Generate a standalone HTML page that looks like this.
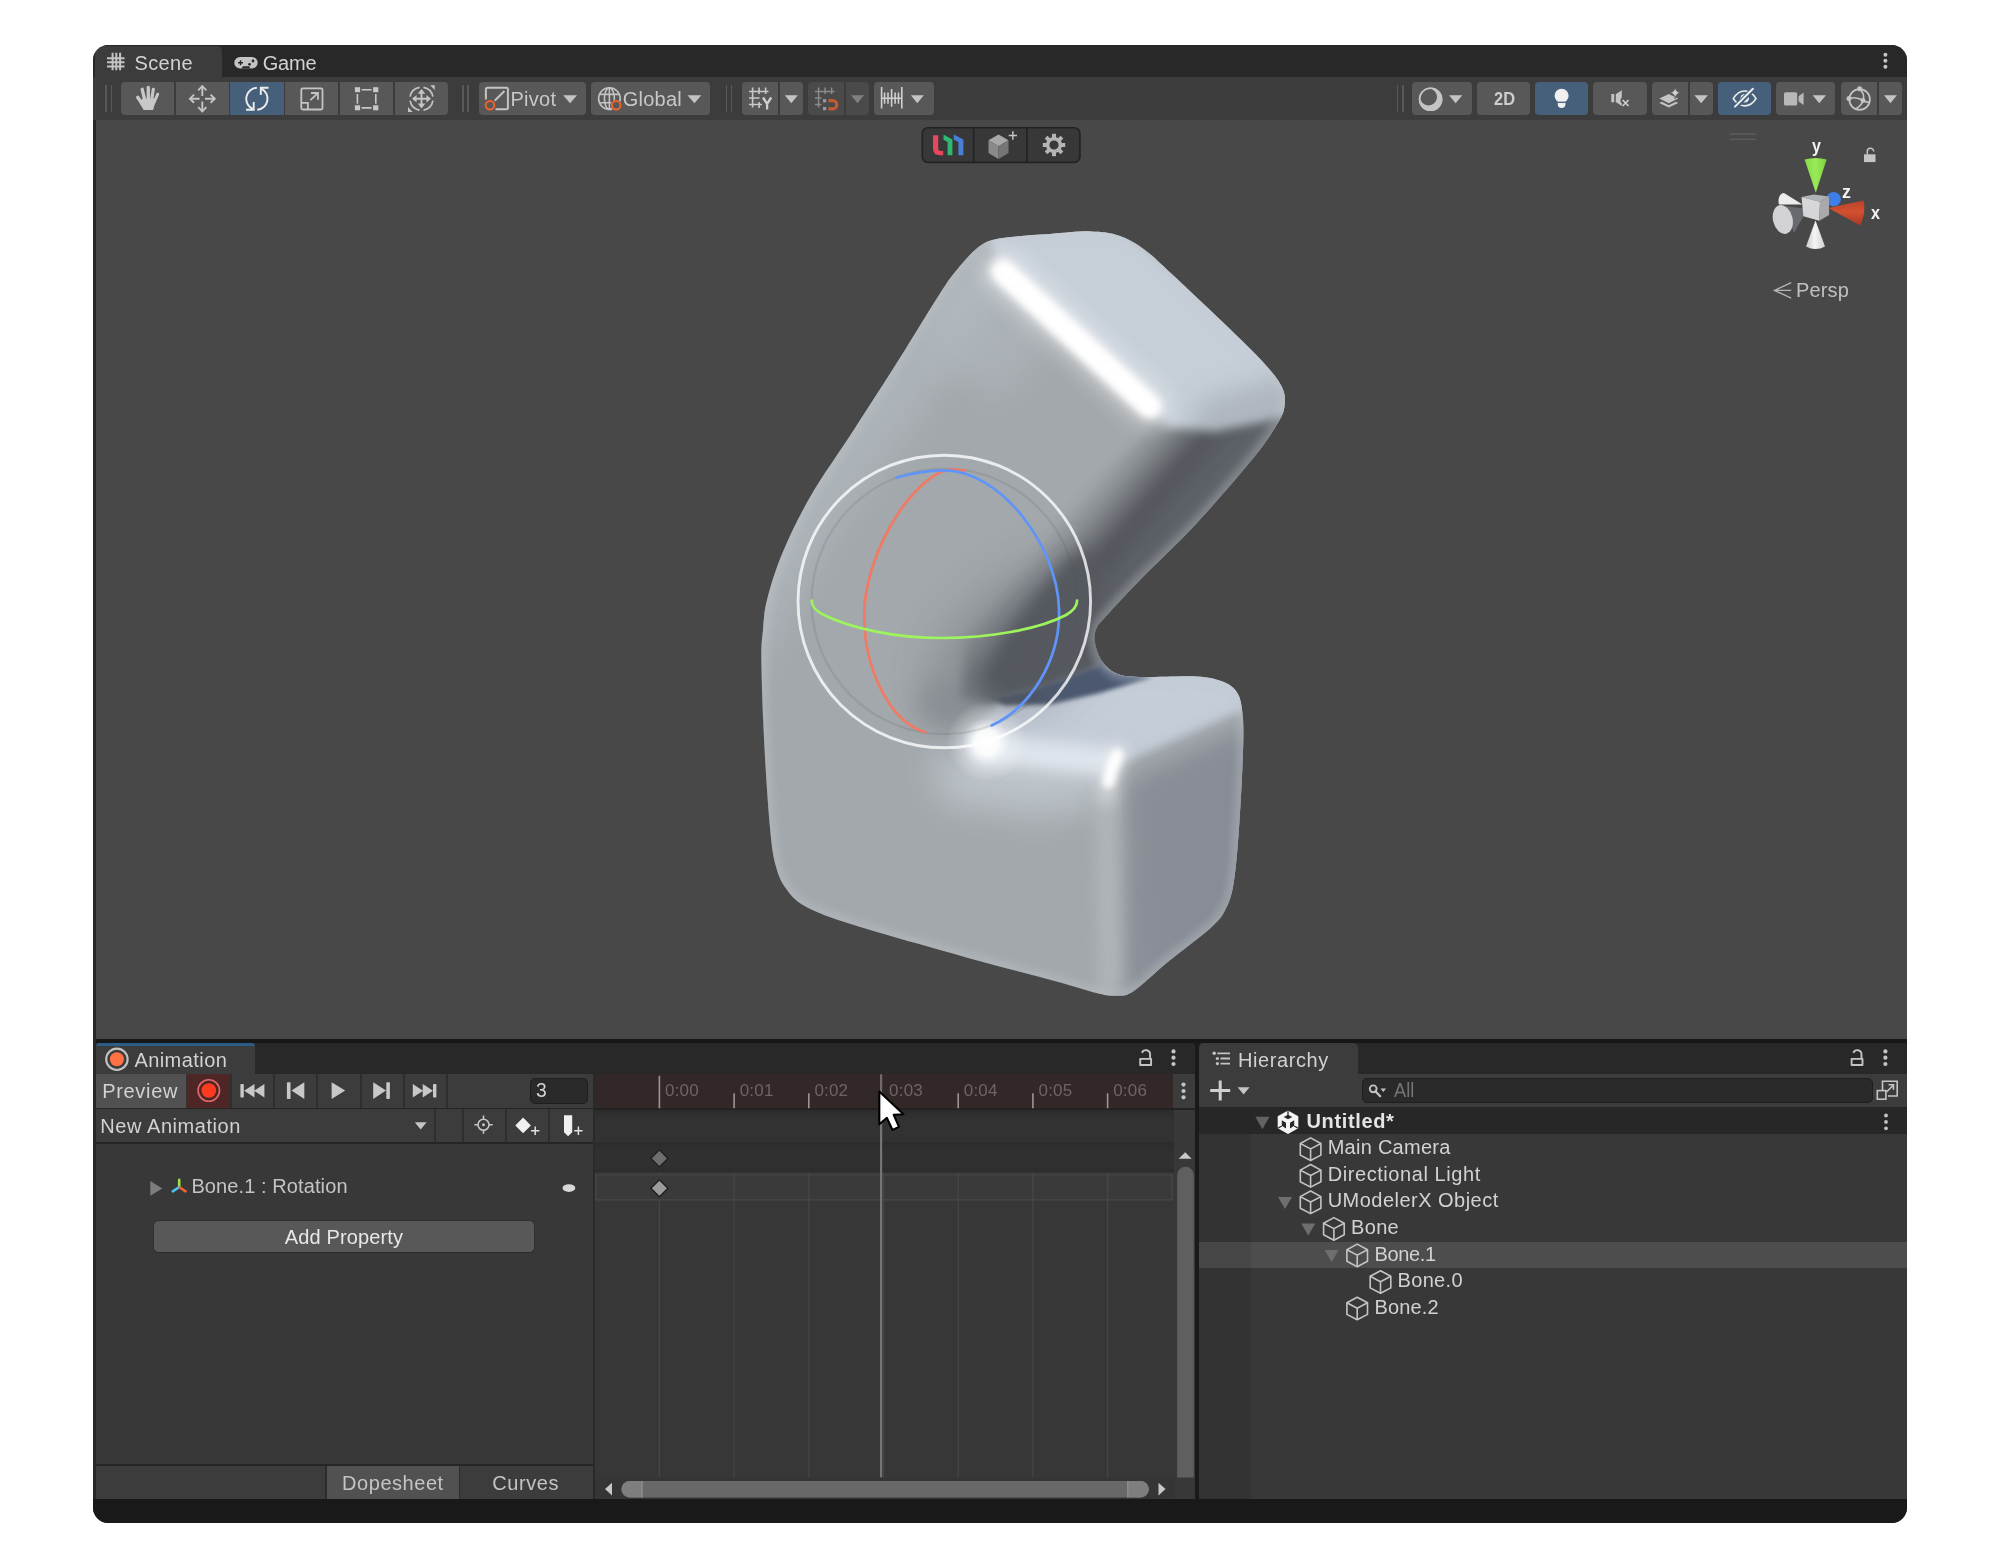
<!DOCTYPE html>
<html>
<head>
<meta charset="utf-8">
<title>Unity Editor</title>
<style>
html,body{margin:0;padding:0;background:#fff;}
body{width:1999px;height:1567px;position:relative;overflow:hidden;font-family:"Liberation Sans",sans-serif;font-size:20px;color:#d2d2d2;}
#win{position:absolute;left:93px;top:45px;width:1814px;height:1477.5px;border-radius:15.5px;background:#282828;overflow:hidden;}
#pg{position:absolute;left:-93px;top:-45px;width:1999px;height:1567px;will-change:transform;}
#pg div,#pg svg,#pg span{position:absolute;}
#pg svg{overflow:visible;}
.t{white-space:nowrap;line-height:24px;height:24px;color:#d2d2d2;transform-origin:0 50%;}
.btn{background:#585858;top:82px;height:33px;}
.btn.on{background:#46607c;}
.btn.dis{background:#4a4a4a;}
.grip{top:85px;width:1.5px;height:27px;background:#595959;}
.sep{top:1074px;width:2px;height:34px;background:#2e2e2e;}
.sep2{top:1109px;width:2px;height:33px;background:#2e2e2e;}
.tl{top:1078.6px;font-size:17px;color:#6f6464;letter-spacing:0.2px;}
.gl{font-weight:bold;font-size:18px;color:#f4f4f4;}
.row{left:1199px;width:708px;height:26.6px;}
</style>
<style id="fit">
#tScene{left:134.60px !important;top:50.60px !important;letter-spacing:0.304px;}
#tGame{left:262.70px !important;top:50.60px !important;letter-spacing:-0.180px;}
#tPivot{left:510.50px !important;top:87.20px !important;letter-spacing:0.273px;}
#tGlobal{left:622.80px !important;top:87.20px !important;letter-spacing:0.226px;}
#t2D{left:1493.60px !important;top:87.20px !important;letter-spacing:0.000px;transform:scaleX(0.8656);transform-origin:0 50%;}
#tPersp{left:1796.00px !important;top:277.70px !important;letter-spacing:0.144px;}
#tAnimation{left:134.40px !important;top:1048.00px !important;letter-spacing:0.436px;}
#tPreview{left:102.20px !important;top:1078.60px !important;letter-spacing:0.685px;}
#tFrame{left:536.40px !important;top:1078.00px !important;letter-spacing:0.000px;transform:scaleX(0.9636);transform-origin:0 50%;}
#tNewAnim{left:100.30px !important;top:1113.80px !important;letter-spacing:0.560px;}
#tBoneRot{left:191.40px !important;top:1173.80px !important;letter-spacing:0.098px;}
#tAddProp{left:284.80px !important;top:1225.00px !important;letter-spacing:0.125px;}
#tDope{left:342.10px !important;top:1470.50px !important;letter-spacing:0.540px;}
#tCurves{left:492.20px !important;top:1470.50px !important;letter-spacing:0.610px;}
#tHier{left:1238.00px !important;top:1048.00px !important;letter-spacing:0.578px;}
#tAll{left:1393.50px !important;top:1078.10px !important;letter-spacing:0.000px;transform:scaleX(0.9090);transform-origin:0 50%;}
#tUntitled{left:1306.50px !important;top:1108.60px !important;letter-spacing:0.633px;}
#tMainCam{left:1327.70px !important;top:1135.40px !important;letter-spacing:0.258px;}
#tDirLight{left:1327.70px !important;top:1161.93px !important;letter-spacing:0.572px;}
#tUMod{left:1327.70px !important;top:1188.46px !important;letter-spacing:0.477px;}
#tBone{left:1351.10px !important;top:1214.99px !important;letter-spacing:0.305px;}
#tBone1{left:1374.40px !important;top:1241.52px !important;letter-spacing:-0.313px;}
#tBone0{left:1397.60px !important;top:1268.05px !important;letter-spacing:0.307px;}
#tBone2{left:1374.40px !important;top:1294.58px !important;letter-spacing:0.147px;}
#tY{left:1811.70px !important;top:133.60px !important;letter-spacing:0.000px;transform:scaleX(0.8900);transform-origin:0 50%;}
#tZ{left:1841.70px !important;top:179.80px !important;letter-spacing:0.000px;transform:scaleX(0.9889);transform-origin:0 50%;}
#tX{left:1871.00px !important;top:200.90px !important;letter-spacing:0.000px;transform:scaleX(0.9000);transform-origin:0 50%;}
</style>
</head>
<body>
<div id="win"><div id="pg">
<!-- all coordinates below are page pixel coordinates -->

<!-- ================= SCENE PANEL ================= -->
<div id="scenepanel" style="left:93px;top:45px;width:1814px;height:996px;background:#282828;"></div>
<div style="left:95.600px;top:1039px;width:1812px;height:9px;background:#171717;"></div>
<div style="left:1195.200px;top:1042.400px;width:3.700px;height:457px;background:#1a1a1a;"></div>
<div style="left:93px;top:1499px;width:1814px;height:24px;background:#191919;"></div>
<div id="scenetab" style="left:95px;top:46px;width:126.5px;height:31px;background:#3c3c3c;border-radius:5px 5px 0 0;"></div>
<div id="toolbar" style="left:93px;top:76.5px;width:1814px;height:43px;background:#3c3c3c;"></div>
<div id="sceneview" style="left:95.6px;top:119.6px;width:1812px;height:919.5px;background:#484848;"></div>
<span class="t" id="tScene" style="left:134.5px;top:50px;">Scene</span>
<span class="t" id="tGame" style="left:262.5px;top:50px;">Game</span>
<div class="btn " style="left:121px;width:53.2px;border-radius:4px 0px 0px 4px;"></div><div class="btn " style="left:175.8px;width:53.2px;border-radius:0px 0px 0px 0px;"></div><div class="btn on" style="left:230.3px;width:53.4px;border-radius:0px 0px 0px 0px;"></div><div class="btn " style="left:285.2px;width:53.2px;border-radius:0px 0px 0px 0px;"></div><div class="btn " style="left:340px;width:53px;border-radius:0px 0px 0px 0px;"></div><div class="btn " style="left:394.7px;width:53.1px;border-radius:0px 4px 4px 0px;"></div><div class="btn " style="left:478.5px;width:107.8px;border-radius:4px 4px 4px 4px;"></div><div class="btn " style="left:591.3px;width:119.2px;border-radius:4px 4px 4px 4px;"></div><div class="btn " style="left:742px;width:36px;border-radius:4px 0px 0px 4px;"></div><div class="btn " style="left:779.8px;width:23.2px;border-radius:0px 4px 4px 0px;"></div><div class="btn dis" style="left:808px;width:36px;border-radius:4px 0px 0px 4px;"></div><div class="btn dis" style="left:845.8px;width:23.2px;border-radius:0px 4px 4px 0px;"></div><div class="btn " style="left:874.4px;width:59.4px;border-radius:4px 4px 4px 4px;"></div><div class="btn " style="left:1412.4px;width:59.6px;border-radius:4px 4px 4px 4px;"></div><div class="btn " style="left:1477px;width:53.4px;border-radius:4px 4px 4px 4px;"></div><div class="btn on" style="left:1535.4px;width:52.9px;border-radius:4px 4px 4px 4px;"></div><div class="btn " style="left:1593.4px;width:53.2px;border-radius:4px 4px 4px 4px;"></div><div class="btn " style="left:1651.5px;width:36.5px;border-radius:4px 0px 0px 4px;"></div><div class="btn " style="left:1690px;width:22.8px;border-radius:0px 4px 4px 0px;"></div><div class="btn on" style="left:1717.9px;width:53.2px;border-radius:4px 4px 4px 4px;"></div><div class="btn " style="left:1775.9px;width:59.6px;border-radius:4px 4px 4px 4px;"></div><div class="btn " style="left:1840.9px;width:36.1px;border-radius:4px 0px 0px 4px;"></div><div class="btn " style="left:1878.8px;width:23.2px;border-radius:0px 4px 4px 0px;"></div><div class="grip" style="left:105.3px;"></div><div class="grip" style="left:110.6px;"></div><div class="grip" style="left:462.3px;"></div><div class="grip" style="left:467.4px;"></div><div class="grip" style="left:725.8px;"></div><div class="grip" style="left:730.8px;"></div><div class="grip" style="left:1396.6px;"></div><div class="grip" style="left:1402.2px;"></div>
<svg style="left:93px;top:45px;" width="1814" height="75" viewBox="93 45 1814 75">
<!-- tab icons -->
<g stroke="#c4c4c4" stroke-width="2"><path d="M112.600 52.800V70.200M116.300 52.800V70.200M120.100 52.800V70.200M107 58.300H124.500M107 62.200H124.500M107 66.400H124.500"/></g>
<g><rect x="234.300" y="57" width="23.400" height="11.400" rx="5.700" fill="#c4c4c4"/><path d="M238 62.700h5M240.500 60.200v5" stroke="#282828" stroke-width="1.500"/><circle cx="249.500" cy="64.300" r="1.400" fill="#282828"/><circle cx="253" cy="61" r="1.400" fill="#282828"/><path d="M241.500 68.400h9l-1.500 -2.200h-6z" fill="#282828"/></g>
<g fill="#c4c4c4"><circle cx="1885.400" cy="54.700" r="2"/><circle cx="1885.400" cy="60.800" r="2"/><circle cx="1885.400" cy="66.800" r="2"/></g>
<!-- hand -->
<g stroke="#c8c8c8" stroke-linecap="round" fill="none"><path d="M144.700 100L142.200 89.300" stroke-width="3.300"/><path d="M148.300 100V87.400" stroke-width="3.300"/><path d="M151.600 100L153.300 89.300" stroke-width="3.200"/><path d="M153.800 103L157.700 94.200" stroke-width="3"/><path d="M143.500 105.500L137.800 97.400" stroke-width="3.400"/></g>
<path d="M142.600 98.500H154.800L156 100L153 110H143.700L139.500 103z" fill="#c8c8c8"/>
<!-- move -->
<g stroke="#c4c4c4" stroke-width="1.900" fill="none"><path d="M202.300 86.200V96M202.300 101.500V111.300M189.900 98.700H199.600M205 98.700H214.800"/><path d="M198.200 90.400L202.300 86.200L206.400 90.400M198.200 107.200L202.300 111.300L206.400 107.200M194.100 94.600L189.900 98.700L194.100 102.800M210.600 94.600L214.800 98.700L210.600 102.800"/></g>
<!-- rotate -->
<g stroke="#ececec" stroke-width="1.900" fill="none"><path d="M256.900 87.700A11.200 11.200 0 0 0 253.100 109.200"/><path d="M253.700 102V109.700H246"/><path d="M261.300 88.600A11.200 11.200 0 0 1 257.200 109.800"/><path d="M260.800 95.100V87.700H268.500"/></g>
<!-- scale -->
<g stroke="#c4c4c4" stroke-width="1.800" fill="none"><rect x="301.300" y="88.300" width="21.200" height="21.200" rx="1.500"/><path d="M301.300 102.800H307.900V109.500"/><path d="M310.400 100.100L317.600 93.300M311 93H318V99.800"/></g>
<!-- rect -->
<g fill="#c8c8c8"><rect x="354.900" y="87.200" width="5.200" height="5"/><rect x="373.100" y="87.200" width="5.200" height="5"/><rect x="354.900" y="105.300" width="5.200" height="5"/><rect x="373.100" y="105.300" width="5.200" height="5"/></g>
<g stroke="#c8c8c8" stroke-width="1.600"><path d="M361.700 89.800H371.600M361.700 107.900H371.600M357.400 94V103.700M375.800 94V103.700"/></g>
<!-- transform -->
<g stroke="#c4c4c4" stroke-width="1.700" fill="none"><path d="M419.500 87.300A11.600 11.600 0 0 0 410.100 96.700M423.500 87.300A11.600 11.600 0 0 1 432.900 96.700M432.900 100.700A11.600 11.600 0 0 1 423.500 110.100M419.500 110.100A11.600 11.600 0 0 1 410.100 100.700"/><path d="M421.500 90.500V107M413.200 98.700H429.800" stroke-width="1.900"/></g>
<g fill="#c4c4c4"><path d="M421.500 89L425.300 93.800H417.700zM421.500 108.400L425.300 103.600H417.700zM412 98.700L416.600 94.900V102.500zM431 98.700L426.400 94.900V102.500z"/><path d="M430.300 85.200H434.700V89.900zM408 107V111.900H412.600z"/></g>
<!-- pivot -->
<g fill="none" stroke-width="1.800"><path d="M485.900 99.500V89.300Q485.900 87.800 487.400 87.800H506.400Q507.900 87.800 507.900 89.300V107.700Q507.900 109.200 506.400 109.200H495.500" stroke="#c4c4c4" stroke-width="2"/><path d="M494.700 100.800L504.500 91" stroke="#c4c4c4" stroke-width="2"/><circle cx="490" cy="105.300" r="4.300" stroke="#f0622e" stroke-width="2"/></g>
<path d="M563.2 95.2H577L570.1 103.2z" fill="#c4c4c4"/>
<!-- global -->
<g fill="none" stroke="#c4c4c4" stroke-width="1.600"><circle cx="609.400" cy="98.600" r="10.800"/><ellipse cx="609.400" cy="98.600" rx="5" ry="10.800"/><path d="M609.400 87.800V109.400M599.500 94.400H619.300M599.500 102.800H613"/></g>
<circle cx="616.200" cy="105.300" r="5.600" fill="#585858"/><circle cx="616.200" cy="105.300" r="4.300" fill="none" stroke="#f0622e" stroke-width="2"/>
<path d="M687.5 95.2H701.3L694.4 103.2z" fill="#c4c4c4"/>
<!-- grid Y -->
<g stroke="#c8c8c8" stroke-width="1.600"><path d="M752.600 87.500V107.500M759.100 87.500V94M759.100 102V108M765.600 87.500V94M749 91.500H768.500M749 98H759.500M749 104.500H762"/></g>
<path d="M763 97.500L767.100 103.800V109.500M771.200 97.500L767.100 103.800" stroke="#d0d0d0" stroke-width="2.300" fill="none"/>
<path d="M784.8 95.2H797.8L791.3 103.2z" fill="#c4c4c4"/>
<!-- snap (disabled) -->
<g stroke="#8a8a8a" stroke-width="1.500"><path d="M818.600 87.500V107.500M825.100 87.500V94M831.600 87.500V94M815 91.500H834.500M815 98H821.500M815 104.500H821.500"/></g>
<g fill="#9a9a9a"><rect x="823" y="99.200" width="3.200" height="3.200"/><rect x="823" y="107" width="3.200" height="3.200"/></g>
<path d="M828.500 100.700H832.700A4.100 4.100 0 0 1 832.700 108.900H828.500" fill="none" stroke="#c25a32" stroke-width="3.200"/>
<path d="M851 95.2H864L857.5 103.2z" fill="#808080"/>
<!-- ruler -->
<g stroke="#d0d0d0" stroke-width="1.600"><path d="M881.600 87V108.500M901.800 87V108.500M881.600 98.300H901.800M884.600 92.500V103.700M888 92.500V103.700M891.600 89V106.800M895.100 92.500V103.700M898.500 92.500V103.700"/></g>
<path d="M910.8 95.2H923.8L917.3 103.2z" fill="#c4c4c4"/>
<!-- shading -->
<circle cx="1430.600" cy="99.300" r="11.800" fill="#c4c4c4"/><circle cx="1428.500" cy="97" r="8.500" fill="#585858"/><circle cx="1430.600" cy="99.300" r="11" fill="none" stroke="#c4c4c4" stroke-width="1.600"/>
<path d="M1449 95.2H1462.3L1455.65 103.2z" fill="#c4c4c4"/>
<!-- light -->
<circle cx="1561.600" cy="95.700" r="7" fill="#f0f0f0"/><path d="M1557.800 101.500H1565.400V104.300A3.800 3.800 0 0 1 1557.800 104.300z" fill="#f0f0f0"/><path d="M1557.500 102.300H1565.700" stroke="#46607c" stroke-width="1.300"/>
<!-- audio -->
<g fill="#c4c4c4"><rect x="1611.300" y="94" width="2.900" height="8.300"/><path d="M1615.800 94.300L1621.800 90.300V97.500A4 4 0 0 0 1621.800 103.500V106L1615.800 102z"/></g>
<path d="M1622.600 100L1628.600 106M1628.600 100L1622.600 106" stroke="#d0d0d0" stroke-width="1.600"/>
<!-- fx -->
<g fill="#c4c4c4"><path d="M1659.300 98.600L1668.800 94L1673 96L1678.200 98.600L1668.800 103.200z"/><path d="M1659.300 103L1661.800 101.800L1668.800 105.200L1675.800 101.800L1678.200 103L1668.800 107.600z"/></g>
<path d="M1675.200 86.500C1675.800 91 1677 92.200 1681.500 92.800C1677 93.400 1675.800 94.600 1675.200 99.100C1674.600 94.600 1673.400 93.400 1668.900 92.800C1673.400 92.200 1674.600 91 1675.200 86.500z" fill="#d0d0d0" stroke="#585858" stroke-width="0.800"/>
<path d="M1694.4 95.2H1707.9L1701.15 103.2z" fill="#c4c4c4"/>
<!-- eye hidden -->
<g fill="none" stroke="#ececec" stroke-width="1.700"><path d="M1733.300 98.600C1737 92.500 1741 91 1744.700 91C1749 91 1753 93.500 1756 98.600C1753 103.500 1749 105.800 1744.700 105.800C1741 105.800 1737 104.500 1733.300 98.600z"/></g>
<circle cx="1744.700" cy="98.300" r="4.300" fill="#ececec"/>
<path d="M1735.600 106.800L1753.300 89" stroke="#46607c" stroke-width="5"/><path d="M1735 106.600L1752.900 88.800" stroke="#ececec" stroke-width="2" stroke-linecap="round"/>
<!-- camera -->
<rect x="1784" y="92.200" width="13.200" height="13.300" rx="1.600" fill="#b8b8b8"/><path d="M1798.600 96.200L1803.600 92.600V105.100L1798.600 101.500z" fill="#b8b8b8"/>
<path d="M1812.6 95.2H1826L1819.3 103.2z" fill="#c4c4c4"/>
<!-- gizmos -->
<g fill="none" stroke="#c4c4c4" stroke-width="1.700"><circle cx="1859.600" cy="99.500" r="10.300"/><path d="M1859.600 89C1864 93 1864.500 96 1863 100.500C1861.500 105 1858 108 1855 109M1849 98.500C1854 97 1859 98 1863 100.500C1866 102 1868 103 1869.500 102"/></g>
<g fill="#c4c4c4"><circle cx="1859.600" cy="88.700" r="2.500"/><circle cx="1849" cy="98.500" r="2.500"/><circle cx="1863" cy="100.500" r="2.400"/></g>
<path d="M1884 95.2H1896.9L1890.45 103.2z" fill="#c4c4c4"/>
</svg>
<span class="t" id="tPivot" style="left:511.3px;top:86.600px;color:#c8c8c8;">Pivot</span>
<span class="t" id="tGlobal" style="left:623.6px;top:86.600px;color:#c8c8c8;">Global</span>
<span class="t" id="t2D" style="left:1493.3px;top:87.400px;font-size:19px;font-weight:bold;color:#cdcdcd;">2D</span>

<!--SCENE3D_BEGIN--><svg id="scene3d" style="left:0;top:0;" width="1999" height="1567" viewBox="0 0 1999 1567">
<defs>
<clipPath id="silc"><path d="M936.8 298.4C946.3 283.7 949.1 278.9 956.7 269.9C964.3 260.9 973.4 249.7 982.4 244.2C991.4 238.7 999.6 238.8 1010.9 237.1C1022.2 235.4 1036.7 234.9 1050.0 234.0C1063.3 233.1 1079.2 231.1 1090.7 231.4C1102.2 231.7 1110.2 232.6 1119.2 235.7C1128.2 238.8 1135.9 243.2 1144.9 249.9C1153.9 256.6 1160.1 263.2 1173.4 275.6C1186.7 288.0 1209.5 309.4 1224.7 324.1C1239.9 338.8 1255.2 353.6 1264.7 364.0C1274.2 374.4 1278.5 380.2 1281.8 386.8C1285.1 393.4 1285.1 398.2 1284.6 403.9C1284.1 409.6 1284.1 412.0 1278.9 421.0C1273.7 430.0 1267.1 441.0 1253.3 458.1C1239.5 475.2 1215.2 503.3 1196.2 523.7C1177.2 544.1 1153.9 565.6 1139.2 580.7C1124.5 595.8 1114.9 606.3 1107.8 614.3C1100.7 622.3 1098.5 623.8 1096.4 628.5C1094.3 633.2 1094.0 637.3 1095.0 642.8C1096.0 648.3 1098.5 656.2 1102.1 661.3C1105.7 666.4 1110.2 671.0 1116.4 673.6C1122.6 676.2 1125.9 676.5 1139.2 677.0C1152.5 677.5 1182.4 675.7 1196.2 676.4C1210.0 677.1 1215.2 678.8 1221.9 681.3C1228.6 683.8 1232.9 686.7 1236.2 691.2C1239.5 695.7 1240.7 699.8 1241.9 708.4C1243.1 717.0 1243.8 722.6 1243.3 742.6C1242.8 762.6 1240.7 804.4 1239.0 828.1C1237.3 851.9 1235.7 871.3 1233.3 885.1C1230.9 898.9 1228.5 903.7 1224.7 910.8C1220.9 917.9 1220.0 919.3 1210.5 927.9C1201.0 936.5 1180.5 951.5 1167.7 962.1C1154.9 972.7 1142.0 985.6 1133.5 991.2C1125.0 996.8 1122.6 995.5 1116.4 995.8C1110.2 996.1 1106.9 995.4 1096.4 992.9C1086.0 990.4 1075.1 986.5 1053.7 980.7C1032.3 974.9 1001.4 967.2 968.1 957.9C934.8 948.6 881.2 933.7 854.1 925.1C827.0 916.5 817.0 912.7 805.6 906.5C794.2 900.3 790.6 894.9 785.6 888.0C780.6 881.1 778.2 875.2 775.6 865.2C773.0 855.2 771.9 848.5 770.0 828.1C768.1 807.7 765.6 770.6 764.2 742.6C762.8 714.6 761.6 678.8 761.4 660.0C761.2 641.2 762.1 640.0 763.0 630.0C763.9 620.0 763.7 613.0 767.0 600.0C770.3 587.0 775.4 569.7 782.8 552.2C790.2 534.7 799.4 515.5 811.3 495.1C823.2 474.7 839.4 452.4 854.1 429.6C868.8 406.8 885.9 380.2 899.7 358.3C913.5 336.4 927.3 313.1 936.8 298.4z"/></clipPath>
<filter id="b2" filterUnits="userSpaceOnUse" x="650" y="150" width="750" height="950"><feGaussianBlur stdDeviation="2"/></filter>
<filter id="b3" filterUnits="userSpaceOnUse" x="650" y="150" width="750" height="950"><feGaussianBlur stdDeviation="3"/></filter>
<filter id="b5" filterUnits="userSpaceOnUse" x="650" y="150" width="750" height="950"><feGaussianBlur stdDeviation="5"/></filter>
<filter id="b8" filterUnits="userSpaceOnUse" x="650" y="150" width="750" height="950"><feGaussianBlur stdDeviation="8"/></filter>
<filter id="b12" filterUnits="userSpaceOnUse" x="650" y="150" width="750" height="950"><feGaussianBlur stdDeviation="12"/></filter>
<filter id="b18" filterUnits="userSpaceOnUse" x="650" y="150" width="750" height="950"><feGaussianBlur stdDeviation="18"/></filter>
<filter id="b26" filterUnits="userSpaceOnUse" x="650" y="150" width="750" height="950"><feGaussianBlur stdDeviation="26"/></filter>
<filter id="b40" filterUnits="userSpaceOnUse" x="650" y="150" width="750" height="950"><feGaussianBlur stdDeviation="40"/></filter>
<radialGradient id="spec"><stop offset="0" stop-color="#fff" stop-opacity="1"/><stop offset="0.3" stop-color="#fff" stop-opacity="0.9"/><stop offset="0.6" stop-color="#f4f8fc" stop-opacity="0.35"/><stop offset="1" stop-color="#fff" stop-opacity="0"/></radialGradient>
</defs>
<path d="M936.8 298.4C946.3 283.7 949.1 278.9 956.7 269.9C964.3 260.9 973.4 249.7 982.4 244.2C991.4 238.7 999.6 238.8 1010.9 237.1C1022.2 235.4 1036.7 234.9 1050.0 234.0C1063.3 233.1 1079.2 231.1 1090.7 231.4C1102.2 231.7 1110.2 232.6 1119.2 235.7C1128.2 238.8 1135.9 243.2 1144.9 249.9C1153.9 256.6 1160.1 263.2 1173.4 275.6C1186.7 288.0 1209.5 309.4 1224.7 324.1C1239.9 338.8 1255.2 353.6 1264.7 364.0C1274.2 374.4 1278.5 380.2 1281.8 386.8C1285.1 393.4 1285.1 398.2 1284.6 403.9C1284.1 409.6 1284.1 412.0 1278.9 421.0C1273.7 430.0 1267.1 441.0 1253.3 458.1C1239.5 475.2 1215.2 503.3 1196.2 523.7C1177.2 544.1 1153.9 565.6 1139.2 580.7C1124.5 595.8 1114.9 606.3 1107.8 614.3C1100.7 622.3 1098.5 623.8 1096.4 628.5C1094.3 633.2 1094.0 637.3 1095.0 642.8C1096.0 648.3 1098.5 656.2 1102.1 661.3C1105.7 666.4 1110.2 671.0 1116.4 673.6C1122.6 676.2 1125.9 676.5 1139.2 677.0C1152.5 677.5 1182.4 675.7 1196.2 676.4C1210.0 677.1 1215.2 678.8 1221.9 681.3C1228.6 683.8 1232.9 686.7 1236.2 691.2C1239.5 695.7 1240.7 699.8 1241.9 708.4C1243.1 717.0 1243.8 722.6 1243.3 742.6C1242.8 762.6 1240.7 804.4 1239.0 828.1C1237.3 851.9 1235.7 871.3 1233.3 885.1C1230.9 898.9 1228.5 903.7 1224.7 910.8C1220.9 917.9 1220.0 919.3 1210.5 927.9C1201.0 936.5 1180.5 951.5 1167.7 962.1C1154.9 972.7 1142.0 985.6 1133.5 991.2C1125.0 996.8 1122.6 995.5 1116.4 995.8C1110.2 996.1 1106.9 995.4 1096.4 992.9C1086.0 990.4 1075.1 986.5 1053.7 980.7C1032.3 974.9 1001.4 967.2 968.1 957.9C934.8 948.6 881.2 933.7 854.1 925.1C827.0 916.5 817.0 912.7 805.6 906.5C794.2 900.3 790.6 894.9 785.6 888.0C780.6 881.1 778.2 875.2 775.6 865.2C773.0 855.2 771.9 848.5 770.0 828.1C768.1 807.7 765.6 770.6 764.2 742.6C762.8 714.6 761.6 678.8 761.4 660.0C761.2 641.2 762.1 640.0 763.0 630.0C763.9 620.0 763.7 613.0 767.0 600.0C770.3 587.0 775.4 569.7 782.8 552.2C790.2 534.7 799.4 515.5 811.3 495.1C823.2 474.7 839.4 452.4 854.1 429.6C868.8 406.8 885.9 380.2 899.7 358.3C913.5 336.4 927.3 313.1 936.8 298.4z" fill="#a3a8ac"/>
<g clip-path="url(#silc)">
<path d="M925.0 290.0L985.0 235.0L1010.0 275.0L930.0 400.0L840.0 520.0L790.0 600.0L745.0 700.0L740.0 560.0z" fill="#bac2c9" opacity="0.45" filter="url(#b18)"/>
<path d="M940.0 280.0L990.0 240.0L1060.0 330.0L1000.0 400.0L930.0 360.0z" fill="#b6bec5" opacity="0.45" filter="url(#b18)"/>
<path d="M985.0 230.0L1100.0 210.0L1310.0 380.0L1300.0 425.0L1170.0 428.0L1000.0 268.0z" fill="#c6cfd8" filter="url(#b5)"/>
<path d="M1200.0 400.0L1300.0 370.0L1300.0 440.0L1185.0 450.0z" fill="#a9b0b8" opacity="0.8" filter="url(#b12)"/>
<linearGradient id="ug" gradientUnits="userSpaceOnUse" x1="1139" y1="425" x2="1257" y2="526"><stop offset="0" stop-color="#54575d" stop-opacity="0"/><stop offset="0.16" stop-color="#54575d" stop-opacity="0.35"/><stop offset="0.36" stop-color="#54575d" stop-opacity="1"/><stop offset="0.65" stop-color="#60646a"/><stop offset="1" stop-color="#70757c"/></linearGradient>
<path d="M1150.0 428.0L1215.0 432.0L1300.0 414.0L1300.0 470.0L1120.0 650.0L1100.0 690.0L1000.0 705.0L960.0 700.0L965.0 640.0L1020.0 570.0L1080.0 495.0z" fill="url(#ug)" filter="url(#b5)"/>
<path d="M960.0 748.0L1000.0 700.0L1100.0 665.0L1255.0 668.0L1255.0 705.0L1112.0 768.0L1040.0 762.0z" fill="#c4cdd8" filter="url(#b5)"/>
<path d="M935.0 740.0L1112.0 758.0L1114.0 800.0L1040.0 815.0L940.0 800.0z" fill="#c9d0d8" opacity="0.7" filter="url(#b18)"/>
<path d="M960.0 690.0L1000.0 720.0L990.0 760.0L940.0 760.0L930.0 720.0z" fill="#9fa5aa" opacity="0.5" filter="url(#b12)"/>
<path d="M1124.0 782.0L1255.0 722.0L1255.0 900.0L1135.0 1005.0L1122.0 1005.0z" fill="#8a8f97" filter="url(#b12)"/>
<path d="M1150.0 790.0L1255.0 740.0L1255.0 900.0L1160.0 960.0z" fill="#878c95" filter="url(#b12)"/>
<path d="M1095.0 800.0L1118.0 796.0L1122.0 990.0L1099.0 1000.0z" fill="#b3b8bc" opacity="0.85" filter="url(#b8)"/>
<path d="M1070.0 560.0L1095.0 640.0L1040.0 700.0L985.0 706.0L935.0 690.0L950.0 640.0L990.0 600.0L1030.0 575.0z" fill="#5d6167" opacity="0.45" filter="url(#b26)"/>
<path d="M1092.0 548.0L1100.0 632.0L1100.0 670.0L1040.0 692.0L1000.0 694.0L988.0 676.0L1003.0 642.0L1034.0 600.0L1068.0 560.0z" fill="#54585f" filter="url(#b8)"/>
<linearGradient id="shg" gradientUnits="userSpaceOnUse" x1="985" y1="690" x2="1150" y2="676"><stop offset="0" stop-color="#51565e"/><stop offset="0.45" stop-color="#4c586d"/><stop offset="1" stop-color="#4a5a74"/></linearGradient>
<path d="M1100.0 660.0L1106.0 667.0L1117.0 672.5L1153.0 677.0L1100.0 693.0L1050.0 704.5L1005.0 705.5L990.0 698.0L1026.0 691.0L1062.0 680.0L1098.0 666.0z" fill="url(#shg)" filter="url(#b2)"/>
<path d="M930.0 676.0L992.0 690.0L984.0 722.0L940.0 734.0L912.0 708.0z" fill="#7f848a" opacity="0.6" filter="url(#b12)"/>
<path d="M936.8 298.4C946.3 283.7 949.1 278.9 956.7 269.9C964.3 260.9 973.4 249.7 982.4 244.2C991.4 238.7 999.6 238.8 1010.9 237.1C1022.2 235.4 1036.7 234.9 1050.0 234.0C1063.3 233.1 1079.2 231.1 1090.7 231.4C1102.2 231.7 1110.2 232.6 1119.2 235.7C1128.2 238.8 1135.9 243.2 1144.9 249.9C1153.9 256.6 1160.1 263.2 1173.4 275.6C1186.7 288.0 1209.5 309.4 1224.7 324.1C1239.9 338.8 1255.2 353.6 1264.7 364.0C1274.2 374.4 1278.5 380.2 1281.8 386.8C1285.1 393.4 1285.1 398.2 1284.6 403.9C1284.1 409.6 1284.1 412.0 1278.9 421.0C1273.7 430.0 1267.1 441.0 1253.3 458.1C1239.5 475.2 1215.2 503.3 1196.2 523.7C1177.2 544.1 1153.9 565.6 1139.2 580.7C1124.5 595.8 1114.9 606.3 1107.8 614.3C1100.7 622.3 1098.5 623.8 1096.4 628.5C1094.3 633.2 1094.0 637.3 1095.0 642.8C1096.0 648.3 1098.5 656.2 1102.1 661.3C1105.7 666.4 1110.2 671.0 1116.4 673.6C1122.6 676.2 1125.9 676.5 1139.2 677.0C1152.5 677.5 1182.4 675.7 1196.2 676.4C1210.0 677.1 1215.2 678.8 1221.9 681.3C1228.6 683.8 1232.9 686.7 1236.2 691.2C1239.5 695.7 1240.7 699.8 1241.9 708.4C1243.1 717.0 1243.8 722.6 1243.3 742.6C1242.8 762.6 1240.7 804.4 1239.0 828.1C1237.3 851.9 1235.7 871.3 1233.3 885.1C1230.9 898.9 1228.5 903.7 1224.7 910.8C1220.9 917.9 1220.0 919.3 1210.5 927.9C1201.0 936.5 1180.5 951.5 1167.7 962.1C1154.9 972.7 1142.0 985.6 1133.5 991.2C1125.0 996.8 1122.6 995.5 1116.4 995.8C1110.2 996.1 1106.9 995.4 1096.4 992.9C1086.0 990.4 1075.1 986.5 1053.7 980.7C1032.3 974.9 1001.4 967.2 968.1 957.9C934.8 948.6 881.2 933.7 854.1 925.1C827.0 916.5 817.0 912.7 805.6 906.5C794.2 900.3 790.6 894.9 785.6 888.0C780.6 881.1 778.2 875.2 775.6 865.2C773.0 855.2 771.9 848.5 770.0 828.1C768.1 807.7 765.6 770.6 764.2 742.6C762.8 714.6 761.6 678.8 761.4 660.0C761.2 641.2 762.1 640.0 763.0 630.0C763.9 620.0 763.7 613.0 767.0 600.0C770.3 587.0 775.4 569.7 782.8 552.2C790.2 534.7 799.4 515.5 811.3 495.1C823.2 474.7 839.4 452.4 854.1 429.6C868.8 406.8 885.9 380.2 899.7 358.3C913.5 336.4 927.3 313.1 936.8 298.4z" fill="none" stroke="#c3c9cf" stroke-width="10" opacity="0.42" filter="url(#b5)"/>
<path d="M1001 270L1150 407" stroke="#fff" stroke-width="34" stroke-linecap="round" opacity="0.55" filter="url(#b12)"/>
<path d="M1002 271L1150 407" stroke="#fff" stroke-width="24" stroke-linecap="round" opacity="0.9" filter="url(#b5)"/>
<path d="M1004 273L1149 406" stroke="#fff" stroke-width="17" stroke-linecap="round" filter="url(#b3)"/>
<path d="M985 750L1100 762" stroke="#e3e9f0" stroke-width="30" stroke-linecap="round" opacity="0.85" filter="url(#b8)"/>
<circle cx="986.500" cy="742" r="40" fill="url(#spec)"/>
<path d="M1117 755C1113 764 1110 773 1108.500 782" stroke="#fff" stroke-width="12" stroke-linecap="round" filter="url(#b3)"/>
<path d="M1118 751C1113 765 1109 780 1107.500 796" stroke="#fff" stroke-width="16" stroke-linecap="round" opacity="0.55" filter="url(#b8)"/>
</g>
</svg><svg id="sceneov" style="left:0;top:0;" width="1999" height="1567" viewBox="0 0 1999 1567">
<g fill="none" stroke-linecap="round">
<circle cx="944.3" cy="601.3" r="132.7" stroke="#505458" stroke-opacity="0.15" stroke-width="2.2"/>
<circle cx="944.3" cy="601.5" r="146.3" stroke="#fff" stroke-opacity="0.78" stroke-width="2.9"/>
<path d="M964.500 470.600Q955 468.800 945.500 470C905 485 864.200 560 864.200 615C864.200 670 890 722 925.300 732.300" stroke="#f07a63" stroke-width="2.700"/>
<path d="M896.900 477.500C912 473 928 470.500 944 470.300C1000 470 1057 545 1059 608.500C1061 660 1030 708 991.600 725.400" stroke="#5f95fa" stroke-width="2.700"/>
<path d="M811.8 600.5C811.5 606 814 610 823 614.500C850 628 895 638 941 638C990 638 1040 629 1066 615C1074 610.500 1077.300 606 1077 600.500" stroke="#9df45c" stroke-width="2.7"/>
</g>
<rect x="922.3" y="127.8" width="157.6" height="34.6" rx="5.5" fill="#383838" stroke="#222" stroke-width="1.6"/>
<path d="M973.6 128.500V162M1026.900 128.500V162" stroke="#222" stroke-width="1.600"/>
<path d="M933 135.300H938.200V148.500Q938.200 151 940.700 151H943.200V155.200H940Q933 155.200 933 148.200z" fill="#e8475f"/>
<path d="M943.500 134.600L952.400 139.400V155.200H947.600V141.900L943.500 139.700z" fill="#2eb872"/>
<path d="M953.800 134.600L963.400 139.400V155.200H958.400V141.900L953.800 139.700z" fill="#4a7fd6"/>
<path d="M998.500 134.500L1008.500 140.300L998.500 146.300L988.500 140.300z" fill="#a8a8a8"/><path d="M988.500 140.300L998.500 146.300V159L988.500 153z" fill="#8a8a8a"/><path d="M1008.500 140.300L998.500 146.300V159L1008.500 153z" fill="#757575"/>
<path d="M1008.700 135.500H1017M1012.850 131.300V139.700" stroke="#c4c4c4" stroke-width="1.500"/>
<path d="M1061.00 145.00L1065.20 145.00" stroke="#b4b4b4" stroke-width="4"/><path d="M1058.95 149.95L1061.92 152.92" stroke="#b4b4b4" stroke-width="4"/><path d="M1054.00 152.00L1054.00 156.20" stroke="#b4b4b4" stroke-width="4"/><path d="M1049.05 149.95L1046.08 152.92" stroke="#b4b4b4" stroke-width="4"/><path d="M1047.00 145.00L1042.80 145.00" stroke="#b4b4b4" stroke-width="4"/><path d="M1049.05 140.05L1046.08 137.08" stroke="#b4b4b4" stroke-width="4"/><path d="M1054.00 138.00L1054.00 133.80" stroke="#b4b4b4" stroke-width="4"/><path d="M1058.95 140.05L1061.92 137.08" stroke="#b4b4b4" stroke-width="4"/>
<circle cx="1054" cy="145" r="6.3" fill="none" stroke="#b4b4b4" stroke-width="3.4"/>
<path d="M1729.600 134H1755.900M1729.600 139.400H1755.900" stroke="#5c5c5c" stroke-width="1.400"/>
<defs><linearGradient id="gcone" x1="0" x2="1"><stop offset="0" stop-color="#86d948"/><stop offset="0.5" stop-color="#9aea58"/><stop offset="1" stop-color="#7fd040"/></linearGradient><linearGradient id="wcone" x1="0" x2="1"><stop offset="0" stop-color="#c8c8c8"/><stop offset="0.45" stop-color="#f4f4f4"/><stop offset="1" stop-color="#d0d0d0"/></linearGradient><linearGradient id="rcone" x1="0" y1="0" x2="0" y2="1"><stop offset="0" stop-color="#b8432c"/><stop offset="0.45" stop-color="#d2502f"/><stop offset="1" stop-color="#a83a26"/></linearGradient></defs>
<path d="M1802.500 204.500L1784 193C1779.500 193.500 1777.500 199 1779 204.500z" fill="#ececec"/>
<path d="M1784 206L1807.500 209L1794 233z" fill="#676b70"/>
<ellipse cx="1782.800" cy="219.500" rx="9.800" ry="14.600" transform="rotate(-14 1782.800 219.500)" fill="#d2d2d4"/>
<circle cx="1833.700" cy="199.200" r="7.200" fill="#3d7fe6"/>
<path d="M1801.500 197L1813.600 194.600L1828.900 196.600L1820 201.800z" fill="#aeb3b8"/>
<path d="M1801.500 197L1820 201.800L1819.300 220.800L1803.400 216.300z" fill="#d6d6d8"/>
<path d="M1820 201.800L1828.900 196.600L1829.100 215.100L1819.300 220.800z" fill="#a9a9ab"/>
<path d="M1804.600 159.500Q1815.500 156.500 1826.600 159.500L1815.800 192.800z" fill="url(#gcone)"/>
<path d="M1828.300 208.100L1863.500 200.500Q1866.500 212 1860.200 225.500z" fill="url(#rcone)"/>
<path d="M1815.500 220.500L1825 246.500Q1815.500 251.500 1806 246.500z" fill="url(#wcone)"/>
<rect x="1864" y="154.300" width="11.500" height="7.800" fill="#c4c4c4"/><path d="M1867.300 154.300V151.500A3.200 3.200 0 0 1 1873.700 151.500" fill="none" stroke="#c4c4c4" stroke-width="1.500"/>
<path d="M1791.200 282.600L1774.500 290.400L1791.200 298.200M1774.500 290.400H1791.200" fill="none" stroke="#b4b4b4" stroke-width="1.300"/>
</svg>
<span class="t" id="tPersp" style="left:1796.8px;top:278px;color:#c0c0c0;">Persp</span>
<span class="t gl" id="tY" style="left:1811.4px;top:134px;">y</span>
<span class="t gl" id="tZ" style="left:1841.5px;top:179.400px;">z</span>
<span class="t gl" id="tX" style="left:1870.8px;top:200.500px;">x</span><!--SCENE3D_END-->
<!--SCENE_CONTENT-->

<!-- ================= ANIMATION PANEL ================= -->
<div id="animpanel" style="left:95.600px;top:1042.500px;width:1099.600px;height:456.500px;background:#383838;border-radius:0 4px 0 0;"></div>

<!-- tab bar -->
<div style="left:95.600px;top:1042.500px;width:1099.600px;height:31.200px;background:#282828;border-radius:0 4px 0 0;"></div>
<div style="left:95.5px;top:1042.5px;width:159.2px;height:31.2px;background:#3c3c3c;border-radius:3.5px 3.5px 0 0;overflow:hidden;"><div style="left:0;top:0;width:160px;height:3.8px;background:#2c5d87;"></div></div>
<svg style="left:104px;top:1047px;" width="26" height="26" viewBox="0 0 26 26"><circle cx="12.9" cy="12.3" r="10.7" fill="none" stroke="#c2c2c2" stroke-width="2.1"/><circle cx="12.9" cy="12.3" r="7" fill="#ff7043"/></svg>
<span class="t" id="tAnimation" style="left:134.4px;top:1047px;">Animation</span>
<!-- lock + kebab -->
<svg style="left:1134px;top:1046px;" width="60" height="24" viewBox="1134 1046 60 24"><path d="M1140.200 1058.900h10.900v6.100h-10.900z M1150.100 1058.900V1054.400a4.200 4.200 0 0 0-8.100 -1.600" fill="none" stroke="#c4c4c4" stroke-width="1.900" stroke-linejoin="round"/><circle cx="1173.500" cy="1051.400" r="2.100" fill="#c4c4c4"/><circle cx="1173.500" cy="1057.700" r="2.100" fill="#c4c4c4"/><circle cx="1173.500" cy="1064" r="2.100" fill="#c4c4c4"/></svg>

<!-- toolbar row 1 -->
<div style="left:95.5px;top:1073.7px;width:498px;height:34.3px;background:#3c3c3c;"></div>
<div style="left:95.5px;top:1073.7px;width:91px;height:34.3px;background:#515151;"></div>
<div style="left:187.5px;top:1073.7px;width:43px;height:34.3px;background:#4f2626;"></div>
<div class="sep" style="left:186.3px;width:1.4px;background:#333;"></div>
<div class="sep" style="left:230.4px;"></div>
<div class="sep" style="left:273px;"></div>
<div class="sep" style="left:316.2px;"></div>
<div class="sep" style="left:359.5px;"></div>
<div class="sep" style="left:402.5px;"></div>
<div class="sep" style="left:445.5px;"></div>
<span class="t" id="tPreview" style="left:103.2px;top:1078px;">Preview</span>
<svg style="left:195px;top:1077px;" width="28" height="28" viewBox="0 0 28 28"><circle cx="13.8" cy="13.5" r="10.7" fill="none" stroke="#e06a6a" stroke-width="1.6"/><circle cx="13.8" cy="13.5" r="7.3" fill="#ff3b1f"/></svg>
<!-- transport icons -->
<svg style="left:230px;top:1074px;" width="220" height="34" viewBox="230 1074 220 34" fill="#c8c8c8">
  <rect x="240.4" y="1084" width="3.4" height="13.6" rx="0.8"/><path d="M254.5 1084v13.6l-10.3-6.8z M264.4 1084v13.6l-10.3-6.8z"/>
  <rect x="286.9" y="1082.2" width="3.6" height="16.8" rx="0.8"/><path d="M304.3 1082.2v16.8l-12.8-8.4z"/>
  <path d="M331.6 1082.2v16.8l13.6-8.4z"/>
  <path d="M373.2 1082.2v16.8l12.8-8.4z"/><rect x="386.3" y="1082.2" width="3.6" height="16.8" rx="0.8"/>
  <path d="M412.8 1084v13.6l10.3-6.8z M422.7 1084v13.6l10.3-6.8z"/><rect x="433" y="1084" width="3.4" height="13.6" rx="0.8"/>
</svg>
<!-- frame field -->
<div style="left:530.2px;top:1078px;width:57.6px;height:25.6px;box-sizing:border-box;background:#2a2a2a;border:1.5px solid #1e1e1e;border-radius:5px;"></div>
<span class="t" id="tFrame" style="left:536px;top:1078.5px;">3</span>
<div style="left:95.5px;top:1108px;width:498px;height:1.4px;background:#242424;"></div>

<!-- toolbar row 2 -->
<div style="left:95.5px;top:1109.3px;width:498px;height:33px;background:#3c3c3c;"></div>
<div class="sep2" style="left:433.5px;"></div>
<div class="sep2" style="left:462.3px;"></div>
<div class="sep2" style="left:505px;"></div>
<div class="sep2" style="left:548.3px;"></div>
<span class="t" id="tNewAnim" style="left:100.8px;top:1114px;">New Animation</span>
<svg style="left:410px;top:1109px;" width="184" height="34" viewBox="410 1109 184 34">
  <path d="M414.8 1122.2h11.8l-5.9 7.4z" fill="#c4c4c4"/>
  <g fill="none" stroke="#c4c4c4" stroke-width="1.6"><circle cx="483.5" cy="1124.7" r="5.5"/><path d="M483.5 1115.5v4M483.5 1129.8v4M474.3 1124.7h4M488.7 1124.7h4"/></g>
  <circle cx="483.5" cy="1124.7" r="1.5" fill="#c4c4c4"/>
  <path d="M523.1 1117.6l7.8 7.8-7.8 7.8-7.8-7.8z" fill="#f0f0f0"/>
  <path d="M531 1130.7h8.4M535.2 1126.5v8.4" stroke="#e0e0e0" stroke-width="1.5"/>
  <path d="M564 1115.3h8.2v17l-4.1 3.9-4.1-3.9z" fill="#f0f0f0"/>
  <path d="M574.2 1130.7h8.4M578.4 1126.5v8.4" stroke="#e0e0e0" stroke-width="1.5"/>
</svg>
<div style="left:95.5px;top:1142.2px;width:498px;height:1.5px;background:#262626;"></div>

<!-- property list -->
<svg style="left:150px;top:1178px;" width="40" height="22" viewBox="150 1178 40 22">
  <path d="M150.3 1181v14.8l12-7.4z" fill="#7e7e7e"/>
  <g stroke-width="2.6" stroke-linecap="round"><path d="M179.2 1186.5v-6.6" stroke="#9be24a"/><path d="M178.6 1187.5l-5.8 3.8" stroke="#4fc3f7"/><path d="M179.8 1187.5l5.8 3.8" stroke="#f0622e"/></g>
</svg>
<span class="t" id="tBoneRot" style="left:192.2px;top:1173.8px;color:#c4c4c4;">Bone.1 : Rotation</span>
<svg style="left:560px;top:1182px;" width="18" height="12" viewBox="0 0 18 12"><ellipse cx="8.9" cy="6.1" rx="6.4" ry="3.9" fill="#d8d8d8"/></svg>
<div style="left:153.400px;top:1220.100px;width:381.900px;height:32.800px;box-sizing:border-box;background:#585858;border:1.700px solid #303030;border-bottom-color:#2b2b2b;border-radius:5.500px;"></div>
<span class="t" id="tAddProp" style="left:284.6px;top:1225px;color:#e8e8e8;">Add Property</span>

<!-- bottom bar -->
<div style="left:95.5px;top:1464.2px;width:498px;height:1.4px;background:#262626;"></div>
<div style="left:95.5px;top:1465.5px;width:498px;height:33.6px;background:#3c3c3c;"></div>
<div style="left:326.6px;top:1465.5px;width:132.4px;height:33.6px;background:#515151;"></div>
<div style="left:325.4px;top:1465.5px;width:1.4px;height:33.6px;background:#2c2c2c;"></div>
<div style="left:458.8px;top:1465.5px;width:1.6px;height:33.6px;background:#2c2c2c;"></div>
<span class="t" id="tDope" style="left:342.8px;top:1470.6px;color:#c4c4c4;">Dopesheet</span>
<span class="t" id="tCurves" style="left:493px;top:1470.6px;color:#c4c4c4;">Curves</span>

<!-- timeline -->
<div style="left:593.4px;top:1073.7px;width:1.6px;height:425.4px;background:#2a2a2a;"></div>
<div id="ruler" style="left:595px;top:1073.700px;width:577.500px;height:34.5px;background:#332828;"></div>
<div style="left:1172.500px;top:1073.700px;width:22.700px;height:34.500px;background:#3c3c3c;"></div>
<div style="left:595px;top:1108.2px;width:600px;height:1.6px;background:#222;"></div>
<div style="left:595px;top:1109.8px;width:578.5px;height:32px;background:linear-gradient(#2c2c2c,#323232 30%,#323232);"></div>
<div style="left:1173.5px;top:1109.8px;width:21.5px;height:389.3px;background:#383838;"></div>
<div style="left:595px;top:1141.8px;width:578.5px;height:30.4px;background:linear-gradient(#2b2b2b,#303030 30%,#313131 80%,#2c2c2c);"></div>
<div style="left:595px;top:1172.2px;width:578.5px;height:304.8px;background:#373737;"></div>
<div style="left:595px;top:1477.500px;width:580px;height:21.500px;background:#353535;"></div>
<svg style="left:595px;top:1073.7px;" width="600" height="426" viewBox="595 1073.7 600 426">
  <g stroke="#464646" stroke-width="1.3"><path d="M659.4 1172.5V1477M734.1 1172.5V1477M808.8 1172.5V1477M883.5 1172.5V1477M958.2 1172.5V1477M1032.9 1172.5V1477M1107.6 1172.5V1477"/></g>
  <rect x="595.7" y="1174.4" width="576.6" height="25.2" fill="#3a3a3a" stroke="#484848" stroke-width="1.3"/>
  <g stroke="#474747" stroke-width="1.3"><path d="M734.1 1174.4V1199.6M808.8 1174.4V1199.6M883.5 1174.4V1199.6M958.2 1174.4V1199.6M1032.9 1174.4V1199.6M1107.6 1174.4V1199.6"/></g>
  <g stroke="#9d9393" stroke-width="1.6"><path d="M659.4 1075.5V1108M734.1 1093V1108M808.8 1093V1108M958.2 1093V1108M1032.9 1093V1108M1107.6 1093V1108"/></g>
  <path d="M881.1 1074V1108" stroke="#736a6a" stroke-width="2.2"/><path d="M881.1 1108V1477" stroke="#757575" stroke-width="2.2"/>
  <path d="M659.4 1149.6l8.5 8.5-8.5 8.5-8.5-8.5z" fill="#6e6e6e" stroke="#1e1e1e" stroke-width="1.3"/>
  <path d="M659.4 1179.5l8.5 8.5-8.5 8.5-8.5-8.5z" fill="#9c9c9c" stroke="#1e1e1e" stroke-width="1.3"/>
  <!-- vertical scrollbar -->
  <path d="M1178.7 1158.5h13l-6.5-6.5z" fill="#c8c8c8"/>
  <path d="M1177.200 1477.200V1174.800a8.300 8.300 0 0 1 16.600 0V1477.200z" fill="#5f5f5f"/>
  <!-- horizontal scrollbar -->
  <path d="M612 1482.5v12.6l-7-6.3z" fill="#c8c8c8"/>
  <path d="M1158.5 1482.5v12.6l7-6.3z" fill="#c8c8c8"/>
  <rect x="621.400" y="1480.700" width="527.500" height="16.400" rx="8.200" fill="#686868"/>
  <path d="M629.600 1480.700h13v16.400h-13a8.200 8.200 0 0 1 0-16.400z" fill="#7e7e7e"/><path d="M642 1480.700V1497.100" stroke="#8c8c8c" stroke-width="1.500"/>
  <path d="M1127.500 1480.700h13.200a8.200 8.200 0 0 1 0 16.400h-13.200z" fill="#7e7e7e"/><path d="M1127.800 1480.700V1497.100" stroke="#8c8c8c" stroke-width="1.500"/>
  <g fill="#c4c4c4"><circle cx="1183.500" cy="1084.300" r="2.100"/><circle cx="1183.500" cy="1090.700" r="2.100"/><circle cx="1183.500" cy="1097" r="2.100"/></g>
</svg>
<span class="t tl" style="left:665px;">0:00</span>
<span class="t tl" style="left:739.7px;">0:01</span>
<span class="t tl" style="left:814.4px;">0:02</span>
<span class="t tl" style="left:889.1px;">0:03</span>
<span class="t tl" style="left:963.8px;">0:04</span>
<span class="t tl" style="left:1038.5px;">0:05</span>
<span class="t tl" style="left:1113.2px;">0:06</span>


<!-- ================= HIERARCHY PANEL ================= -->
<div id="hierpanel" style="left:1199px;top:1042.500px;width:708px;height:456.500px;background:#383838;border-radius:4px 4px 0 0;"></div>

<!-- tab bar -->
<div style="left:1199px;top:1042.500px;width:708px;height:31.200px;background:#282828;border-radius:4px 4px 0 0;"></div>
<div style="left:1199px;top:1042.5px;width:158.8px;height:31.2px;background:#3c3c3c;border-radius:5px 5px 0 0;"></div>
<svg style="left:1210px;top:1048px;" width="24" height="22" viewBox="1210 1048 24 22"><g stroke="#c4c4c4" stroke-width="1.800"><path d="M1217.300 1053.300h12.700M1220.500 1058.500h9.500M1220.500 1063.600h9.500"/></g><g fill="#c4c4c4"><circle cx="1214.200" cy="1053.300" r="1.700"/><circle cx="1217.400" cy="1058.500" r="1.600"/><circle cx="1217.400" cy="1063.600" r="1.600"/></g></svg>
<span class="t" id="tHier" style="left:1238.8px;top:1047px;">Hierarchy</span>
<svg style="left:1840px;top:1046px;" width="60" height="24" viewBox="1840 1046 60 24"><path d="M1851.600 1058.900h10.900v6.100h-10.900z M1861.500 1058.900V1054.400a4.200 4.200 0 0 0-8.100 -1.600" fill="none" stroke="#c4c4c4" stroke-width="1.900" stroke-linejoin="round"/><circle cx="1885.400" cy="1051.400" r="2.100" fill="#c4c4c4"/><circle cx="1885.400" cy="1057.700" r="2.100" fill="#c4c4c4"/><circle cx="1885.400" cy="1064" r="2.100" fill="#c4c4c4"/></svg>
<!-- toolbar -->
<div style="left:1199px;top:1073.7px;width:708px;height:33.6px;background:#3c3c3c;"></div>
<div style="left:1199px;top:1107.2px;width:708px;height:1.4px;background:#242424;"></div>
<svg style="left:1205px;top:1076px;" width="50" height="30" viewBox="1205 1076 50 30"><path d="M1210.200 1090.500h20M1220.200 1080.500v20" stroke="#d0d0d0" stroke-width="3"/><path d="M1237.600 1087.200h12l-6 7.300z" fill="#c4c4c4"/></svg>
<div style="left:1361.8px;top:1078.2px;width:511px;height:25px;box-sizing:border-box;background:#2a2a2a;border:1.5px solid #1e1e1e;border-radius:5px;"></div>
<svg style="left:1365px;top:1080px;" width="30" height="22" viewBox="1365 1080 30 22"><circle cx="1373.200" cy="1088.800" r="3.400" fill="none" stroke="#c4c4c4" stroke-width="1.900"/><path d="M1375.600 1091.400l4.600 4.800" stroke="#c4c4c4" stroke-width="2.200" stroke-linecap="round"/><path d="M1380.500 1088.500h5.600l-2.800 3.400z" fill="#c4c4c4"/></svg>
<span class="t" id="tAll" style="left:1393.3px;top:1078.4px;color:#757575;">All</span>
<svg style="left:1874px;top:1078px;" width="28" height="26" viewBox="1874 1078 28 26"><g fill="none" stroke="#c4c4c4" stroke-width="1.600"><path d="M1882.500 1090.500v-9.200h14.700v14.700h-9.200"/><rect x="1877.300" y="1090.600" width="8.600" height="8.600"/><path d="M1886.500 1092l6.800-6.800M1888.600 1084.800h4.900v4.900"/></g></svg>
<!-- scene row -->
<div style="left:1199px;top:1108.400px;width:708px;height:25.600px;background:#272727;"></div>
<!-- gutter -->
<div style="left:1199px;top:1133.9px;width:52.3px;height:365.2px;background:#333333;"></div>
<div style="left:1199px;top:1241.7px;width:708px;height:26.1px;background:#4d4d4d;"></div><div style="left:1199px;top:1241.7px;width:52.3px;height:26.1px;background:#474747;"></div>
<svg style="left:1199px;top:1108px;" width="707" height="392" viewBox="1199 1108 707 392">
<path d="M1255.300 1116.800h14.200l-7.100 12.500z" fill="#626262"/>
<!-- unity logo -->
<g transform="translate(1288 1122.300)">
<path d="M0 -11.700L10.300 -6V6L0 11.800L-10.300 6V-6z" fill="#f4f4f4"/>
<path d="M0 -7.500L4.300 -5.300L0 -3.100L-4.300 -5.300z" fill="#272727"/>
<path d="M0 -11.700V-7" stroke="#272727" stroke-width="1.300"/>
<path d="M-6.200 -2L-2 0.400V6.100L-6.200 3.500z" fill="#272727"/>
<path d="M6.200 -2L2 0.400V6.100L6.200 3.500z" fill="#272727"/>
<path d="M-10.300 6L-6.200 3.700M10.300 6L6.200 3.700" stroke="#272727" stroke-width="1.200"/>
</g>
<g fill="#c4c4c4"><circle cx="1886" cy="1115.500" r="1.900"/><circle cx="1886" cy="1121.900" r="1.900"/><circle cx="1886" cy="1128.300" r="1.900"/></g>
<g transform="translate(1310.6 1149.1)" fill="none" stroke="#c4c4c4" stroke-width="1.6" stroke-linejoin="round"><path d="M0 -11.2L10.3 -5.6V6L0 11.4L-10.3 6V-5.6z"/><path d="M-10.3 -5.6L0 -0.2L10.3 -5.6M0 -0.2V11.4"/></g><g transform="translate(1310.6 1175.7)" fill="none" stroke="#c4c4c4" stroke-width="1.6" stroke-linejoin="round"><path d="M0 -11.2L10.3 -5.6V6L0 11.4L-10.3 6V-5.6z"/><path d="M-10.3 -5.6L0 -0.2L10.3 -5.6M0 -0.2V11.4"/></g><g transform="translate(1310.6 1202.2)" fill="none" stroke="#c4c4c4" stroke-width="1.6" stroke-linejoin="round"><path d="M0 -11.2L10.3 -5.6V6L0 11.4L-10.3 6V-5.6z"/><path d="M-10.3 -5.6L0 -0.2L10.3 -5.6M0 -0.2V11.4"/></g><path d="M1278.0 1197.0h14l-7 12z" fill="#6e6e6e"/><g transform="translate(1333.9 1228.8)" fill="none" stroke="#c4c4c4" stroke-width="1.6" stroke-linejoin="round"><path d="M0 -11.2L10.3 -5.6V6L0 11.4L-10.3 6V-5.6z"/><path d="M-10.3 -5.6L0 -0.2L10.3 -5.6M0 -0.2V11.4"/></g><path d="M1301.3 1223.6h14l-7 12z" fill="#6e6e6e"/><g transform="translate(1357.2 1255.3)" fill="none" stroke="#c4c4c4" stroke-width="1.6" stroke-linejoin="round"><path d="M0 -11.2L10.3 -5.6V6L0 11.4L-10.3 6V-5.6z"/><path d="M-10.3 -5.6L0 -0.2L10.3 -5.6M0 -0.2V11.4"/></g><path d="M1324.6 1250.1h14l-7 12z" fill="#6e6e6e"/><g transform="translate(1380.5 1281.9)" fill="none" stroke="#c4c4c4" stroke-width="1.6" stroke-linejoin="round"><path d="M0 -11.2L10.3 -5.6V6L0 11.4L-10.3 6V-5.6z"/><path d="M-10.3 -5.6L0 -0.2L10.3 -5.6M0 -0.2V11.4"/></g><g transform="translate(1357.2 1308.4)" fill="none" stroke="#c4c4c4" stroke-width="1.6" stroke-linejoin="round"><path d="M0 -11.2L10.3 -5.6V6L0 11.4L-10.3 6V-5.6z"/><path d="M-10.3 -5.6L0 -0.2L10.3 -5.6M0 -0.2V11.4"/></g>
</svg>
<span class="t" id="tUntitled" style="left:1307.3px;top:1109px;font-weight:bold;color:#e4e4e4;">Untitled*</span>
<span class="t" id="tMainCam" style="left:1328.8px;top:1135.5px;color:#d2d2d2;">Main Camera</span><span class="t" id="tDirLight" style="left:1328.8px;top:1162.0px;color:#d2d2d2;">Directional Light</span><span class="t" id="tUMod" style="left:1328.8px;top:1188.6px;color:#d2d2d2;">UModelerX Object</span><span class="t" id="tBone" style="left:1352.1px;top:1215.2px;color:#d2d2d2;">Bone</span><span class="t" id="tBone1" style="left:1375.4px;top:1241.7px;color:#d2d2d2;">Bone.1</span><span class="t" id="tBone0" style="left:1398.7px;top:1268.2px;color:#d2d2d2;">Bone.0</span><span class="t" id="tBone2" style="left:1375.4px;top:1294.8px;color:#d2d2d2;">Bone.2</span>


<svg id="cursor" style="left:870px;top:1085px;" width="45" height="52" viewBox="870 1085 45 52"><path d="M879.3 1091.6L903.500 1114.200L893.700 1114.900L899 1126.900L892.500 1129.900L886.900 1117.900L879.300 1124.300z" fill="#fff" stroke="#000" stroke-width="2.100" stroke-linejoin="round"/></svg>
</div></div>
</body>
</html>
